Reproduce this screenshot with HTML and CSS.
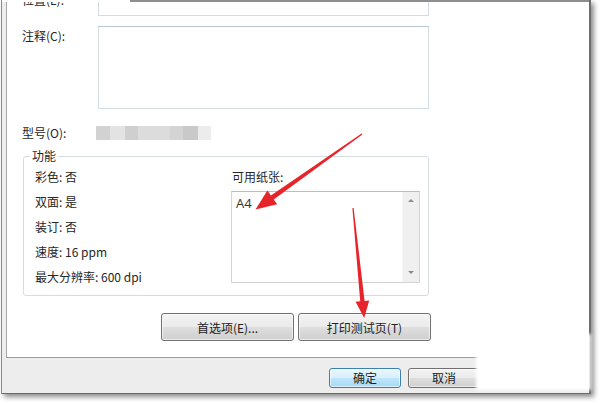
FILE: index.html
```html
<!DOCTYPE html>
<html lang="zh">
<head>
<meta charset="utf-8">
<link rel="stylesheet" href="styles.css">
</head>
<body>
<div class="window">
  <div class="topbar"><div class="topbar-gap"></div><div class="topbar-line"></div></div>
  <div class="content">
    <div class="row row-first">
      <div class="label">位置(L):</div>
      <div class="input input-top"></div>
    </div>
    <div class="row row-comment">
      <div class="label">注释(C):</div>
      <div class="input textarea"></div>
    </div>
    <div class="row row-model">
      <div class="label">型号(O):</div>
      <div class="blur">
        <span class="b1"></span><span class="b2"></span><span class="b3"></span><span class="b4"></span><span class="b5"></span><span class="b6"></span><span class="b7"></span>
      </div>
    </div>
    <fieldset class="group">
      <legend>功能</legend>
      <div class="group-body">
        <ul class="features">
          <li>彩色: 否</li>
          <li>双面: 是</li>
          <li>装订: 否</li>
          <li>速度: 16 ppm</li>
          <li>最大分辨率: 600 dpi</li>
        </ul>
        <div class="paper">
          <div class="paper-label">可用纸张:</div>
          <div class="listbox">
            <div class="list-items">A4</div>
            <div class="scrollbar">
              <span class="arrow-up"></span>
              <span class="arrow-down"></span>
            </div>
          </div>
        </div>
      </div>
    </fieldset>
    <div class="actions">
      <button class="btn btn-wide">首选项(E)...</button>
      <button class="btn btn-wide">打印测试页(T)</button>
    </div>
  </div>
  <div class="footer">
    <button class="btn btn-small btn-default">确定</button>
    <button class="btn btn-small">取消</button>
    <button class="btn btn-small">应用(A)</button>
  </div>
</div>
<div class="blot"></div>
<svg class="arrows" width="600" height="404" viewBox="0 0 600 404">
  <polygon fill="#e8242b" points="362.4,134.5 273.7,199.4 277.2,204.2 255.5,209.5 267.4,190.6 270.9,195.4 361.6,133.5"/>
  <polygon fill="#e8242b" points="352.4,208 360.2,301.3 355.6,301.8 364.2,318 369.2,300.4 364.6,300.9 353.6,208"/>
</svg>
</body>
</html>
```
FILE: styles.css
```css
* { box-sizing: border-box; }
html, body { margin: 0; padding: 0; }
body {
  width: 600px;
  height: 404px;
  overflow: hidden;
  background: #fff;
  position: relative;
  font-family: "Noto Sans CJK SC", "Microsoft YaHei", sans-serif;
  font-size: 12px;
  color: #262626;
}
.window {
  margin-left: 1px;
  width: 590px;
  height: 394px;
  border-left: 1px solid #8a8a8a;
  border-right: 2px solid #6e6e6e;
  border-bottom: 1px solid #6a6a6a;
  background: #ededed;
  box-shadow: 3px 3px 5px rgba(0, 0, 0, 0.45);
  display: flex;
  flex-direction: column;
}
.topbar { height: 2px; display: flex; }
.topbar-gap { width: 128px; background: #fff; }
.topbar-line { flex: 1; background: #8e8e8e; }
.content {
  margin-left: 4px;
  height: 356px;
  border-left: 1px solid #a8a8a8;
  border-bottom: 1px solid #9c9c9c;
  background: #fff;
  padding-left: 15px;
  overflow: hidden;
}
.row { display: flex; }
.label { width: 76px; line-height: 16px; flex: none; }
.input {
  width: 331px;
  border: 1px solid #d2dce5;
  border-top-color: #b9c5d0;
  background: #fff;
}
.row-first { margin-top: -10px; }
.input-top { height: 24px; }
.row-comment { margin-top: 10px; }
.row-comment .label { padding-top: 2px; }
.textarea { height: 83px; }
.row-model { margin-top: 16px; }
.blur { display: flex; height: 14px; margin-left: -2px; margin-top: 1px; }
.blur span { display: block; height: 100%; }
.b1 { width: 14px; background: #d2d2d2; }
.b2 { width: 15px; background: #e3e3e3; }
.b3 { width: 13px; background: #cfcfcf; }
.b4 { width: 32px; background: #dcdcdc; }
.b5 { width: 13px; background: #d4d4d4; }
.b6 { width: 15px; background: #c9c9c9; }
.b7 { width: 13px; background: #ececec; }
.group {
  margin: 8px 0 0 1px;
  width: 406px;
  height: 147px;
  padding: 0 0 0 11px;
  border: 1px solid #d5dde3;
  border-radius: 3px;
}
.group legend {
  padding: 0 2px;
  margin-left: -5px;
  line-height: 14px;
}
.group-body { display: flex; }
.features {
  list-style: none;
  margin: 0;
  padding: 6px 0 0 0;
  width: 196px;
}
.features li { line-height: 16px; height: 25px; }
.paper { padding-top: 6px; }
.paper-label { line-height: 16px; margin-left: 1px; }
.listbox {
  margin-top: 6px;
  width: 189px;
  height: 92px;
  border: 1px solid #d3d3d3;
  border-top-color: #bdbdbd;
  display: flex;
}
.list-items { flex: 1; padding: 4px 0 0 4px; line-height: 14px; font-family: "Open Sans", "Noto Sans", sans-serif; font-size: 13px; color: #333; }
.scrollbar {
  width: 17px;
  background: #f0f0f0;
  border-left: 1px solid #f7f7f7;
  display: flex;
  flex-direction: column;
  justify-content: space-between;
  align-items: center;
  padding: 7px 0 8px;
}
.arrow-up, .arrow-down { width: 0; height: 0; border-left: 3px solid transparent; border-right: 3px solid transparent; }
.arrow-up { border-bottom: 3px solid #8a8a8a; }
.arrow-down { border-top: 3px solid #8a8a8a; }
.actions {
  display: flex;
  gap: 4px;
  margin: 17px 0 0 139px;
}
.btn {
  font-family: "Noto Sans CJK SC", "Microsoft YaHei", sans-serif;
  font-size: 12px;
  color: #222;
  padding: 0;
  border: 1px solid #707070;
  border-radius: 3px;
  background: linear-gradient(#f3f3f3 0%, #ebebeb 48%, #dedede 52%, #cfcfcf 100%);
  box-shadow: inset 0 0 0 1px rgba(255,255,255,0.6);
}
.btn-wide { width: 133px; height: 28px; }
.footer {
  flex: 1;
  display: flex;
  align-items: flex-start;
  gap: 7px;
  padding: 10px 0 0 327px;
}
.btn-small { width: 72px; height: 20px; line-height: 16px; }
.btn-default {
  border-color: #3c7fb1;
  background: linear-gradient(#eaf6fd 0%, #d9f0fc 48%, #bee6fd 52%, #a7d9f5 100%);
}
.blot {
  position: absolute;
  left: 478px;
  top: 336px;
  width: 111px;
  height: 52px;
  background: #fff;
  box-shadow: 0 0 3px 2px #fff;
}
.arrows { position: absolute; left: 0; top: 0; pointer-events: none; }
```
